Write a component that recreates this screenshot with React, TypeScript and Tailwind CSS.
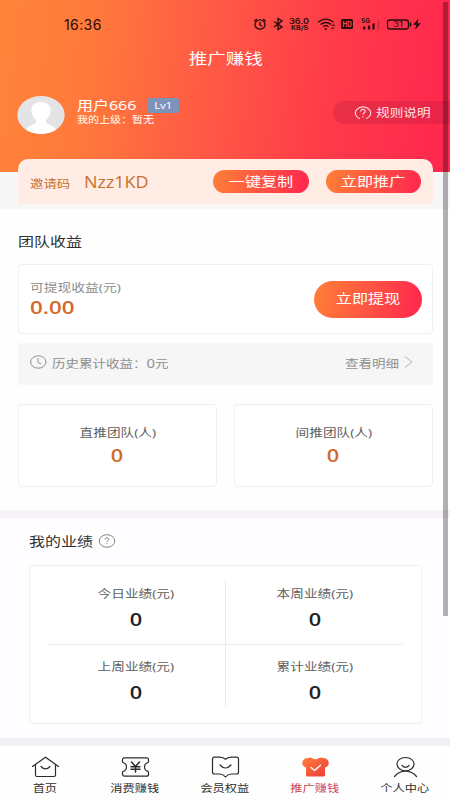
import type { ReactNode } from 'react';
import clsx from 'clsx';

// Type in this app is set wider than it is tall.
function Wide({
  children,
  className,
  center,
}: {
  children: ReactNode;
  className?: string;
  center?: boolean;
}) {
  return (
    <span
      className={clsx(
        'block shrink-0 scale-x-[1.24] whitespace-nowrap',
        center ? 'origin-center' : 'origin-left',
        className,
      )}
    >
      {children}
    </span>
  );
}

function StatusBar() {
  return (
    <div className="flex h-[48px] items-center pl-[64px] text-[#2a0b0b]">
      <span className="w-[189px] font-['Inter'] text-[14px] tracking-[0.4px]">
        16:36
      </span>
      <svg width="170" height="16" viewBox="0 0 170 16" fill="none" stroke="currentColor" strokeWidth="1.3">
        <ellipse cx="7" cy="8.5" rx="5" ry="4.6" />
        <path d="M7 6v3l2 1M1.2 5.2 4 3M12.8 5.2 10 3" />
        <path d="M21 5.5l8 5.5-4 2.5v-11l4 2.5-8 6" strokeWidth="1.4" />
        <path d="M65 6.2q8-6 15.500 0M67.500 8.500q5.300-4 10.500 0M70 10.700q2.800-2 5.500 0" />
        <path d="M72.700 13h.1" strokeWidth="2" strokeLinecap="round" />
        <path d="M78.500 9.500h3l-1.500-1.700M81.500 12h-3l1.500 1.500" strokeWidth="0.800" />
        <rect x="88" y="3" width="12" height="10" rx="1.500" fill="currentColor" stroke="none" />
        <path d="M111.200 10.500v3M116 9.500v4M120.500 7.500v6" strokeWidth="2.200" />
        <path d="M125.500 3.500v10" strokeWidth="1.500" opacity="0.25" />
        <rect x="134.500" y="4" width="21" height="9" rx="2.500" />
        <path d="M157.500 6.500v4" strokeWidth="1.500" />
        <path d="M165.500 2.800l-5.500 6h3.300l-1.300 5 6-6.500h-3.500z" fill="currentColor" stroke="none" />
        <g fill="currentColor" stroke="none" fontFamily="Inter, sans-serif">
          <text x="36" y="7.500" fontSize="8" fontWeight="600" textLength="20" lengthAdjust="spacingAndGlyphs">36.0</text>
          <text x="38" y="14" fontSize="6" fontWeight="700" textLength="17" lengthAdjust="spacingAndGlyphs">KB/S</text>
          <text x="108" y="7" fontSize="6" fontWeight="700" textLength="9" lengthAdjust="spacingAndGlyphs">5G</text>
          <text x="140" y="11" fontSize="7.500" textLength="10" lengthAdjust="spacingAndGlyphs">31</text>
          <text x="89.500" y="10.800" fontSize="7.500" fontWeight="700" fill="#ff4747" textLength="9.500" lengthAdjust="spacingAndGlyphs">HD</text>
        </g>
      </svg>
    </div>
  );
}

function Avatar() {
  return (
    <svg width="48" height="38" viewBox="0 0 48 38" preserveAspectRatio="none">
      <defs>
        <clipPath id="avatar">
          <ellipse cx="24" cy="19" rx="23.700" ry="19" />
        </clipPath>
      </defs>
      <g clipPath="url(#avatar)">
        <rect width="48" height="38" fill="#e4e4e6" />
        <path
          d="M24 6c-7 0-10 4-9.500 9 .3 4 2 7 4.500 9 .5 2-.5 3.500-3 4.500-4 1.500-7 2.500-8 9.500h32c-1-7-4-8-8-9.500-2.500-1-3.500-2.500-3-4.500 2.500-2 4.200-5 4.500-9C34 10 31 6 24 6z"
          fill="#fff"
        />
      </g>
    </svg>
  );
}

function Header() {
  return (
    <header className="h-[172px] bg-[linear-gradient(97deg,#ff833a_0%,#ff7a3b_20%,#ff5546_50%,#ff3b49_72%,#ff2a4e_95%)] text-white">
      <StatusBar />
      <h1 className="flex h-[20px] items-center justify-center pl-px">
        <Wide center className="text-[14.900px]">推广赚钱</Wide>
      </h1>
      <div className="flex pl-[17px] pt-[28px]">
        <Avatar />
        <div className="pl-[12px]">
          <div className="flex h-[19px] items-center">
            <div className="w-[70px]">
              <Wide className="text-[12.900px]">用户666</Wide>
            </div>
            <div className="flex h-[15px] w-[32px] items-center justify-center rounded-[2px] bg-[#7e93ba]">
              <Wide center className="text-[9px]">Lv1</Wide>
            </div>
          </div>
          <div className="flex h-[10px] items-center">
            <Wide className="text-[8.900px]">我的上级：暂无</Wide>
          </div>
        </div>
        <div className="ml-auto mt-[5px] flex h-[23px] w-[117px] items-center rounded-l-full bg-[#901030]/20 pl-[21px]">
          <svg width="18" height="14" viewBox="0 0 18 14" fill="none" stroke="#ffe3e3" strokeWidth="1.100">
            <path d="M6 12.800A7.700 6.200 0 1 1 12 12.800" />
            <path d="M6.500 5.500c0-3 5-2.500 4.700-.1C11 7 9 6.700 9 8.800M9 10.200v1.200" />
          </svg>
          <Wide className="ml-[4px] mt-px text-[11px] text-[#ffe3e3]">规则说明</Wide>
        </div>
      </div>
    </header>
  );
}

function Pill({ children, className }: { children: ReactNode; className?: string }) {
  return (
    <button
      className={clsx(
        'flex items-center justify-center bg-[linear-gradient(100deg,#ff7b38_5%,#ff5542_50%,#ff2c4c_92%)] text-white',
        className,
      )}
    >
      <Wide center>{children}</Wide>
    </button>
  );
}

function InviteCard() {
  return (
    <div className="mx-[18px] -mt-[13px] flex h-[45px] w-[415px] items-center rounded-t-[10px] bg-[#ffede5] pl-[12px] text-[#c9702f]">
      <div className="mt-[5px] w-[54px]">
        <Wide className="text-[10.800px]">邀请码</Wide>
      </div>
      <div className="w-[129px]">
        <span className="block origin-left scale-x-[1.12] font-['Open_Sans'] text-[16px]">Nzz1KD</span>
      </div>
      <Pill className="h-[23px] w-[96px] rounded-full pl-[1px] text-[13px]">一键复制</Pill>
      <Pill className="ml-[17px] h-[23px] w-[95px] rounded-full text-[13px]">立即推广</Pill>
    </div>
  );
}

function Stat({ label, value, orange }: { label: string; value: string; orange?: boolean }) {
  return (
    <div className="flex flex-col items-center">
      <Wide center className="h-[20px] text-[11px] leading-[20px] text-[#606060]">
        {label}
      </Wide>
      <Wide
        center
        className={clsx(
          "h-[24px] font-['Open_Sans'] text-[17.500px] font-semibold leading-[24px]",
          orange ? 'text-[#d5692b]' : 'mt-[3px] text-[#222]',
        )}
      >
        {value}
      </Wide>
    </div>
  );
}

function Earnings() {
  return (
    <section className="h-[301px] bg-[#fefefe] px-[18px]">
      <h2 className="flex h-[55px] items-center pt-[10px] text-[12.900px] text-[#303030]">
        <Wide>团队收益</Wide>
      </h2>
      <div className="flex h-[70px] w-[415px] items-center rounded-[4px] border border-[#f0f0f1] bg-white pl-[11px]">
        <div className="w-[284px]">
          <Wide className="h-[18px] text-[11.100px] leading-[18px] text-[#8c8c8c]">可提现收益(元)</Wide>
          <Wide className="h-[22px] font-['Open_Sans'] text-[18px] font-semibold leading-[21px] text-[#d5692b]">
            0.00
          </Wide>
        </div>
        <Pill className="h-[37px] w-[108px] rounded-full text-[13px]">立即提现</Pill>
      </div>
      <div className="mt-[9px] flex h-[42px] w-[415px] items-center rounded-[3px] bg-[#f6f6f6] px-[12px] pb-[4px] text-[10.900px] text-[#8f8f8f]">
        <svg width="17" height="14" viewBox="0 0 17 14" fill="none" stroke="currentColor">
          <ellipse cx="8.300" cy="7" rx="7.700" ry="6.200" />
          <path d="M8 3v4.500l3 1.500" />
        </svg>
        <div className="mt-[3px] w-[298px] pl-[5px]">
          <Wide>
            历史累计收益：<span className="text-[12px]">0</span>元
          </Wide>
        </div>
        <Wide className="mt-[4px]">查看明细</Wide>
        <svg className="ml-[15px] shrink-0" width="10" height="14" viewBox="0 0 10 14" fill="none" stroke="#b5b5b5">
          <path d="M1 1.500l7 5.500-7 5.500" />
        </svg>
      </div>
      <div className="mt-[19px] flex w-[415px] gap-[17px]">
        <div className="h-[83px] flex-1 rounded-[4px] border border-[#f0f0f1] bg-white pt-[18px]">
          <Stat label="直推团队(人)" value="0" orange />
        </div>
        <div className="h-[83px] flex-1 rounded-[4px] border border-[#f0f0f1] bg-white pt-[18px]">
          <Stat label="间推团队(人)" value="0" orange />
        </div>
      </div>
    </section>
  );
}

function Performance() {
  return (
    <section className="h-[220px] bg-[#fefdff] pl-[29px]">
      <h2 className="flex h-[47px] items-center text-[12.900px] text-[#303030]">
        <div className="mt-px w-[69px]">
          <Wide>我的业绩</Wide>
        </div>
        <svg className="-mt-[2px]" width="18" height="14" viewBox="0 0 18 14" fill="none" stroke="#777" strokeWidth="0.900">
          <ellipse cx="9" cy="7" rx="7.700" ry="6.300" />
          <path d="M7 5.500c0-2.300 4-2 3.800-.1C10.700 6.700 9 6.600 9 8.200M9 9.200v1" />
        </svg>
      </h2>
      <div className="h-[159px] w-[393px] rounded-[4px] border border-[#f0f0f1] bg-white px-[18px] pt-[14px]">
        <div className="grid grid-cols-2">
          <div className="h-[65px] border-b border-r border-[#ececee] pt-[4px]">
            <Stat label="今日业绩(元)" value="0" />
          </div>
          <div className="h-[65px] border-b border-[#ececee] pl-[2px] pt-[4px]">
            <Stat label="本周业绩(元)" value="0" />
          </div>
          <div className="h-[62px] border-r border-[#ececee] pt-[12px]">
            <Stat label="上周业绩(元)" value="0" />
          </div>
          <div className="h-[62px] pl-[2px] pt-[12px]">
            <Stat label="累计业绩(元)" value="0" />
          </div>
        </div>
      </div>
    </section>
  );
}

const tabs = [
  {
    label: '首页',
    icon: <path d="M1.500 10.500 14.500 1.200 27.500 10.500M4.500 8.700V19q0 1.500 1.500 1.500h17q1.500 0 1.500-1.500V8.700M10 10.500q4.500 4.800 9 0" />,
  },
  {
    label: '消费赚钱',
    icon: (
      <>
        <path d="M3.500 1.800h22q2 0 2 2v2.400q-4 1.200-4 4.800t4 4.800v2.400q0 2-2 2h-22q-2 0-2-2v-2.400q4-1.200 4-4.800t-4-4.800V3.800q0-2 2-2z" />
        <path d="M10.500 6l4 4.500 4-4.500M10 10.800h9M10 13.300h9M14.500 10.500v5.500" strokeWidth="1.500" />
      </>
    ),
  },
  {
    label: '会员权益',
    icon: <path d="M3.500 1.200h5q4 .2 6 2 2-1.800 6-2h5q2 0 2 2V16q0 2-2 2h-5q-4 .3-6 3-2-2.700-6-3h-5q-2 0-2-2V3.200q0-2 2-2zM9 9q5.500 6 11 0" />,
  },
  {
    label: '推广赚钱',
    active: true,
    icon: (
      <>
        <path
          d="M5 11.500Q.8 10 1.300 6.500 2 2.200 7 2q2.500-1.200 4.500.2 1 1 3 1t3-1Q19.500.8 22 2q5 .2 5.700 4.500.5 3.500-3.700 5V19q0 1.500-1.500 1.500h-16Q5 20.500 5 19z"
          fill="url(#gift)"
          stroke="none"
        />
        <path d="M10 11.500l3.500 3 6-5.200" stroke="#fff" strokeWidth="1.300" />
      </>
    ),
  },
  {
    label: '个人中心',
    icon: <path d="M14.500 1.500c-5 0-8.500 2.800-8.500 6.500s3.500 6.800 8.500 6.800S23 11.700 23 8s-3.500-6.500-8.500-6.500zM3.500 20.500q4.500-5.300 11-5.300t11 5.300M11 9.500q3.500 3.500 7 0" />,
  },
];

function TabBar() {
  return (
    <nav className="grid h-[54px] grid-cols-5 bg-[#fefefe]">
      {tabs.map((tab) => (
        <div key={tab.label} className="flex flex-col items-center pt-[10px]">
          <svg width="29" height="22" viewBox="0 0 29 22" fill="none" stroke="#2c2c2c" strokeWidth="1.200" strokeLinejoin="round" strokeLinecap="round">
            <defs>
              <linearGradient id="gift" x1="0" y1="0" x2="1" y2="1">
                <stop stopColor="#ff8038" />
                <stop offset="0.900" stopColor="#ef403d" />
              </linearGradient>
            </defs>
            {tab.icon}
          </svg>
          <Wide
            center
            className={clsx(
              'h-[20px] text-[9.900px] leading-[21px]',
              tab.active ? 'text-[#cf4660]' : 'text-[#303030]',
            )}
          >
            {tab.label}
          </Wide>
        </div>
      ))}
    </nav>
  );
}

export default function App() {
  return (
    <main className="relative h-[800px] w-[450px] overflow-hidden bg-white font-['Noto_Sans','Noto_Sans_CJK_SC',sans-serif]">
      <Header />
      <div className="flow-root h-[37px] bg-[#f7f7f8]">
        <InviteCard />
      </div>
      <Earnings />
      <div className="h-[8px] bg-[#f6f2f8]" />
      <Performance />
      <div className="h-[8px] bg-[#f4f1f5]" />
      <TabBar />
      {/* scroll thumb */}
      <div className="absolute right-[2px] top-[2px] h-[614px] w-[5px] bg-black/30" />
    </main>
  );
}
